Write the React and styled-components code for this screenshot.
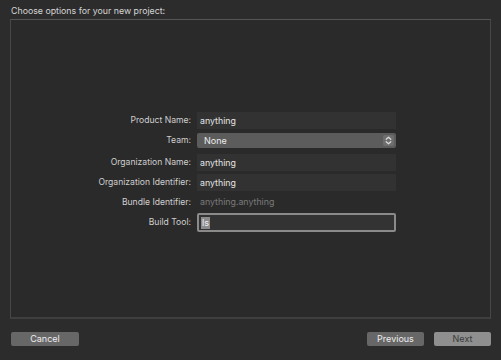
import React from "react";
import styled, { createGlobalStyle } from "styled-components";

const Global = createGlobalStyle`
  html, body { margin: 0; padding: 0; background: #2c2c2c; }
  body { font-family: "Inter", "Liberation Sans", sans-serif; }
`;

const Window = styled.div`
  width: 501px;
  height: 360px;
  box-sizing: border-box;
  background: #2c2c2c;
  padding: 5px 10px 0 10px;
  display: flex;
  flex-direction: column;
`;

const Title = styled.div`
  font-size: 8.8px;
  color: #d6d6d6;
  height: 14px;
  line-height: 12px;
  padding-left: 1px;
`;

const Panel = styled.div`
  height: 300px;
  box-sizing: border-box;
  border: 1px solid #474747;
  border-top-color: #555;
  border-bottom: 2px solid #3f3f3f;
  background: #2a2a2a;
  display: flex;
  padding-top: 92px;
`;

const Form = styled.div`
  display: grid;
  grid-template-columns: 180px 199px;
  column-gap: 6px;
  row-gap: 3px;
  align-content: start;
`;

const Label = styled.div`
  font-size: 8.6px;
  color: #cfcfcf;
  text-align: right;
  height: ${(p) => p.$h || 17}px;
  line-height: ${(p) => p.$h || 17}px;
  margin-top: ${(p) => p.$mt || 0}px;
`;

const Field = styled.div`
  height: 17px;
  line-height: 17px;
  background: #323232;
  color: #e4e4e4;
  font-size: 8.8px;
  padding-left: 3px;
  box-sizing: border-box;
  margin-top: ${(p) => p.$mt || 0}px;
`;

const Plain = styled.div`
  height: 14px;
  line-height: 14px;
  color: #7a7a7a;
  font-size: 8.8px;
  padding-left: 3px;
  margin-top: ${(p) => p.$mt || 0}px;
`;

const Select = styled.div`
  height: 15px;
  margin: 1px 0;
  border-radius: 2px;
  background: #5c5c5c;
  color: #ececec;
  font-size: 9px;
  display: flex;
  align-items: center;
  justify-content: space-between;
  padding-left: 7px;
  box-sizing: border-box;
`;

const Stepper = styled.div`
  width: 11px;
  height: 11px;
  margin-right: 2px;
  border-radius: 2px;
  background: #6e6e6e;
  display: flex;
  align-items: center;
  justify-content: center;
`;

const FocusField = styled.div`
  height: 19px;
  box-sizing: border-box;
  border: 2px solid #8a8a8a;
  border-radius: 2px;
  background: #333;
  display: flex;
  align-items: center;
  padding-left: 2px;
  margin-top: 1px;
`;

const Selected = styled.span`
  background: #8c8c8c;
  color: #f0f0f0;
  font-size: 9px;
  line-height: 12px;
  padding: 0 1px;
`;

const Footer = styled.div`
  display: flex;
  align-items: center;
  padding-top: 13px;
  gap: 10px;
`;

const Button = styled.button`
  width: ${(p) => p.$w || 57}px;
  height: 14px;
  border: none;
  border-radius: 2px;
  padding: 0;
  font-family: "Inter", "Liberation Sans", sans-serif;
  font-size: 9px;
  line-height: 14px;
  background: ${(p) => (p.$primary ? "#8f8f8f" : "#676767")};
  color: ${(p) => (p.$primary ? "#3a3a3a" : "#ededed")};
  margin-left: ${(p) => p.$ml || 0}px;
`;

const Spacer = styled.div`
  flex: 1;
`;

export default function App() {
  return (
    <>
      <Global />
      <Window>
        <Title>Choose options for your new project:</Title>
        <Panel>
          <Form>
            <Label>Product Name:</Label>
            <Field>anything</Field>
            <Label>Team:</Label>
            <Select>
              <span>None</span>
              <Stepper>
                <svg width="7" height="9" viewBox="0 0 7 9" fill="none" stroke="#dcdcdc" strokeWidth="1.2" strokeLinecap="round" strokeLinejoin="round">
                  <path d="M1.2 3.3 L3.5 1.2 L5.8 3.3" />
                  <path d="M1.2 5.7 L3.5 7.8 L5.8 5.7" />
                </svg>
              </Stepper>
            </Select>
            <Label $mt={2}>Organization Name:</Label>
            <Field $mt={2}>anything</Field>
            <Label>Organization Identifier:</Label>
            <Field>anything</Field>
            <Label $h={14} $mt={1}>Bundle Identifier:</Label>
            <Plain $mt={1}>anything.anything</Plain>
            <Label $h={19} $mt={1}>Build Tool:</Label>
            <FocusField>
              <Selected>ls</Selected>
            </FocusField>
          </Form>
        </Panel>
        <Footer>
          <Button $w={68} $ml={1}>Cancel</Button>
          <Spacer />
          <Button $w={57}>Previous</Button>
          <Button $w={57} $primary>Next</Button>
        </Footer>
      </Window>
    </>
  );
}
